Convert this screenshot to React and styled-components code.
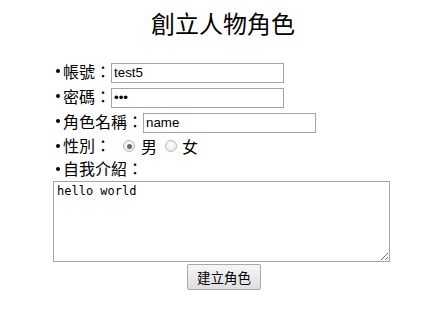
import styled, { createGlobalStyle } from "styled-components";

const GlobalStyle = createGlobalStyle`
  html, body {
    margin: 0;
    padding: 0;
    background: #ffffff;
  }
  body {
    font-family: "Noto Sans CJK TC", "Noto Sans", sans-serif;
    color: #000000;
  }
`;

const Wrapper = styled.div`
  width: 354px;
  margin-left: 46px;
  padding-top: 6px;
`;

const Title = styled.h2`
  margin: 0 0 20px;
  text-align: center;
  font-size: 24px;
  font-weight: 400;
  line-height: 34px;
`;

const Form = styled.form`
  padding-left: 7px;
`;

const FieldList = styled.ul`
  list-style: none;
  margin: 0;
  padding: 0;
`;

const Field = styled.li`
  display: flex;
  align-items: center;
  height: ${(p) => p.$h || 25}px;
  font-size: 16px;
`;

const Bullet = styled.span`
  width: 10px;
  flex-shrink: 0;
  display: flex;
  justify-content: flex-start;
  padding-left: 3px;
  box-sizing: border-box;
  padding-bottom: 3px;

  &::before {
    content: "";
    width: 4px;
    height: 4px;
    border-radius: 50%;
    background: #000;
  }
`;

const Label = styled.span`
  line-height: 18px;
  padding-bottom: 4px;
  white-space: nowrap;
`;

const TextInput = styled.input`
  box-sizing: border-box;
  width: 173px;
  height: 20px;
  margin: 0;
  padding: 1px 2px;
  border: 1px solid #a4a4a4;
  font-family: "Liberation Sans", Arial, sans-serif;
  font-size: 13.33px;
  color: #000;
  outline: none;
`;

const RadioGroup = styled.div`
  display: flex;
  align-items: center;
  margin-left: 12px;
  padding-bottom: 2px;
`;

const Radio = styled.span`
  width: 12px;
  height: 12px;
  box-sizing: border-box;
  border-radius: 50%;
  border: 1px solid #b8b8b8;
  background: radial-gradient(circle at 50% 40%, #ffffff 0%, #e4e4e4 100%);
  display: flex;
  align-items: center;
  justify-content: center;
  margin-right: ${(p) => p.$gap}px;

  &::after {
    content: "";
    display: ${(p) => (p.$checked ? "block" : "none")};
    width: 5px;
    height: 5px;
    border-radius: 50%;
    background: #6a6a6a;
  }
`;

const RadioText = styled.span`
  line-height: 18px;
  margin-right: ${(p) => p.$gap || 0}px;
`;

const Intro = styled.textarea`
  display: block;
  box-sizing: border-box;
  width: 337px;
  height: 81px;
  margin: 0;
  padding: 2px 3px;
  border: 1px solid #a4a4a4;
  font-family: "DejaVu Sans Mono", "Liberation Mono", monospace;
  font-size: 12px;
  line-height: 15px;
  color: #000;
  resize: vertical;
  outline: none;
`;

const Actions = styled.div`
  display: flex;
  justify-content: center;
  padding-top: 2px;
  padding-right: 5px;
`;

const SubmitButton = styled.button`
  box-sizing: border-box;
  width: 74px;
  height: 26px;
  padding: 0;
  border: 1px solid #a8a8a8;
  border-radius: 2px;
  background: linear-gradient(#f6f6f6, #dedede);
  font-family: "Noto Sans CJK TC", sans-serif;
  font-size: 13.5px;
  line-height: 24px;
  color: #000;
`;

export default function App() {
  return (
    <>
      <GlobalStyle />
      <Wrapper>
        <Title>創立人物角色</Title>
        <Form onSubmit={(e) => e.preventDefault()}>
          <FieldList>
            <Field>
              <Bullet />
              <Label>帳號：</Label>
              <TextInput defaultValue="test5" />
            </Field>
            <Field>
              <Bullet />
              <Label>密碼：</Label>
              <TextInput type="password" defaultValue="abc" />
            </Field>
            <Field>
              <Bullet />
              <Label>角色名稱：</Label>
              <TextInput defaultValue="name" />
            </Field>
            <Field $h={24}>
              <Bullet />
              <Label>性別：</Label>
              <RadioGroup>
                <Radio $checked $gap={6} />
                <RadioText $gap={8}>男</RadioText>
                <Radio $gap={5} />
                <RadioText>女</RadioText>
              </RadioGroup>
            </Field>
            <Field $h={22}>
              <Bullet />
              <Label>自我介紹：</Label>
            </Field>
          </FieldList>
          <Intro defaultValue="hello world" />
          <Actions>
            <SubmitButton type="submit">建立角色</SubmitButton>
          </Actions>
        </Form>
      </Wrapper>
    </>
  );
}
